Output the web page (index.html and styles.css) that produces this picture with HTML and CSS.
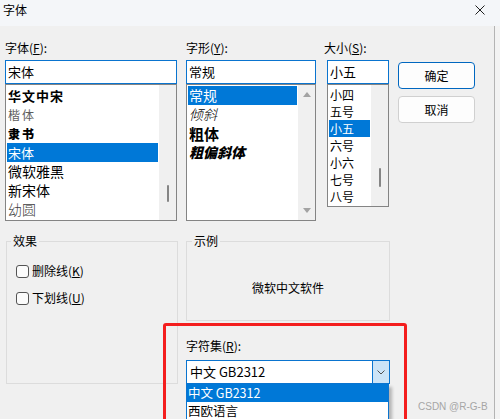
FILE: index.html
```html
<!DOCTYPE html>
<html lang="zh-CN">
<head>
    <meta charset="UTF-8">
    <title>字体</title>
    <link rel="stylesheet" href="styles.css">
</head>
<body>
    <div class="dialog">
        <header class="titlebar">
            <span>字体</span>
            <svg class="close" viewBox="0 0 10 10"><path d="M0.5 0.5L9.5 9.5M9.5 0.5L0.5 9.5"/></svg>
        </header>

        <div class="body">
            <div class="pickers">
                <div class="col col-font">
                    <label class="caption">字体(<u>F</u>):</label>
                    <div class="field">宋体</div>
                    <div class="listbox">
                        <ul class="items">
                            <li class="f-zhongsong">华文中宋</li>
                            <li class="f-kai">楷体</li>
                            <li class="f-li">隶书</li>
                            <li class="f-song sel">宋体</li>
                            <li class="f-yahei">微软雅黑</li>
                            <li class="f-yahei">新宋体</li>
                            <li class="f-yuan">幼圆</li>
                        </ul>
                        <div class="scrollbar"><span class="thumb"></span></div>
                    </div>
                </div>

                <div class="col col-style">
                    <label class="caption">字形(<u>Y</u>):</label>
                    <div class="field">常规</div>
                    <div class="listbox">
                        <ul class="items">
                            <li class="sel">常规</li>
                            <li class="s-italic">倾斜</li>
                            <li class="s-bold">粗体</li>
                            <li class="s-bolditalic">粗偏斜体</li>
                        </ul>
                        <div class="scrollbar arrows">
                            <span class="up"></span>
                            <span class="down"></span>
                        </div>
                    </div>
                </div>

                <div class="col col-size">
                    <label class="caption">大小(<u>S</u>):</label>
                    <div class="field">小五</div>
                    <div class="listbox">
                        <ul class="items">
                            <li>小四</li>
                            <li>五号</li>
                            <li class="sel">小五</li>
                            <li>六号</li>
                            <li>小六</li>
                            <li>七号</li>
                            <li>八号</li>
                        </ul>
                        <div class="scrollbar"><span class="thumb"></span></div>
                    </div>
                </div>

                <div class="actions">
                    <button class="btn primary">确定</button>
                    <button class="btn">取消</button>
                </div>
            </div>

            <div class="lower">
                <fieldset class="group effects">
                    <legend>效果</legend>
                    <label class="check"><span class="box"></span><span>删除线(<u>K</u>)</span></label>
                    <label class="check"><span class="box"></span><span>下划线(<u>U</u>)</span></label>
                </fieldset>

                <div class="right">
                    <fieldset class="group sample">
                        <legend>示例</legend>
                        <div class="preview">微软中文软件</div>
                    </fieldset>
                    <label class="caption charset">字符集(<u>R</u>):</label>
                    <div class="combo">
                        <span class="value">中文 GB2312</span>
                        <span class="drop"><svg viewBox="0 0 8 5"><path d="M0.5 0.5L4 4L7.5 0.5"/></svg></span>
                    </div>
                    <ul class="dropdown">
                        <li class="sel">中文 GB2312</li>
                        <li>西欧语言</li>
                    </ul>
                </div>
            </div>
        </div>

        <!-- red highlight box and blog watermark drawn over the dialog -->
        <div class="mark"></div>
        <div class="watermark">CSDN @R-G-B</div>
    </div>
</body>
</html>
```

FILE: styles.css
```css
body { margin: 0; width: 500px; height: 419px; overflow: hidden; background: #f3f3f3; font-family: "Noto Sans CJK SC", sans-serif; font-size: 12px; color: #000; }
u { text-underline-offset: 1px; }

.dialog { position: relative; width: 500px; height: 419px; overflow: hidden; }
.titlebar { height: 26px; box-sizing: border-box; display: flex; justify-content: space-between; align-items: flex-start; padding: 2px 15px 0 3px; line-height: 16px; background: #f4f6f9; }
.close { width: 10px; height: 10px; margin-top: 3px; }
.close path { stroke: #1f1f1f; stroke-width: 1; fill: none; }

.body { width: 495px; height: 393px; box-sizing: border-box; padding: 14px 0 0 5px; background: #f0f0f0; border-right: 1px solid #b4b4b4; }

/* top row: font / style / size pickers and the buttons */
.pickers { display: flex; align-items: flex-start; }
.col-font { width: 172px; margin-right: 9px; }
.col-style { width: 130px; margin-right: 11px; }
.col-size { width: 62px; margin-right: 9px; }
.col-size .caption { margin-left: -3px; }

.caption { display: block; line-height: 16px; margin-bottom: 4px; }
.field { height: 24px; box-sizing: border-box; border: 1px solid #0a74cf; background: #fff; padding: 0 2px; font-size: 13px; line-height: 22px; }

.listbox { display: flex; box-sizing: border-box; border: 1px solid #848484; background: #fff; overflow: hidden; }
.col-font .listbox, .col-style .listbox { height: 137px; }
.col-size .listbox { height: 123px; }
.items { list-style: none; margin: 0; padding: 1px; flex: 1; min-width: 0; }
.items li { height: 19px; line-height: 19px; padding-left: 1px; white-space: nowrap; overflow: hidden; font-size: 14px; }
.col-size .items li { height: 17px; line-height: 17px; font-size: 12px; }
.items li.sel { background: #0078d7; color: #fff; }

.f-zhongsong { font-weight: 700; font-size: 13px !important; letter-spacing: 1px; }
.f-kai { color: #5e5e5e; font-size: 12px !important; letter-spacing: 2px; }
.f-li { font-weight: 900; font-size: 12px !important; letter-spacing: 2px; }
.f-song { font-size: 13px !important; }
.f-yuan { color: #3c3c3c; font-weight: 300; }
.s-italic { font-style: italic; font-weight: 300; }
.s-bold { font-weight: 700; font-size: 15px !important; }
.s-bolditalic { font-weight: 900; font-style: italic; }

.scrollbar { width: 17px; background: #f0f0f0; display: flex; flex-direction: column; align-items: center; }
.thumb { width: 2px; border-radius: 1px; background: #858585; }
.col-font .thumb { margin-top: 100px; height: 17px; }
.col-size .thumb { margin-top: 83px; height: 19px; }
.arrows { justify-content: space-between; padding: 7px 0; box-sizing: border-box; }
.up, .down { width: 0; height: 0; border-left: 4px solid transparent; border-right: 4px solid transparent; }
.up { border-bottom: 5px solid #a3a3a3; }
.down { border-top: 5px solid #a3a3a3; }

.actions { width: 77px; display: flex; flex-direction: column; gap: 7px; margin-top: 22px; }
.btn { height: 27px; border: 1px solid #d0d0d0; border-radius: 4px; background: #fdfdfd; font-family: inherit; font-size: 12px; color: #000; padding: 0; }
.btn.primary { border-color: #0067c0; }

/* lower row: effects, sample and charset */
.lower { display: flex; gap: 8px; margin: 12px 0 0 1px; }
.group { margin: 0; border: 1px solid #dcdcdc; box-sizing: border-box; min-width: 0; }
.group legend { padding: 0 2px; margin-left: -5px; line-height: 16px; }

.effects { width: 172px; height: 151px; padding: 14px 9px 0 9px; }
.check { display: flex; align-items: center; gap: 3px; height: 16px; margin-bottom: 11px; line-height: 16px; }
.box { width: 13px; height: 13px; box-sizing: border-box; border: 1px solid #545454; border-radius: 3px; background: #fbfbfb; }

.right { width: 204px; display: flex; flex-direction: column; }
.sample { height: 88px; padding: 31px 10px 0 10px; }
.preview { text-align: center; line-height: 16px; }
.charset { margin: 17px 0 6px; }

.combo { display: flex; height: 24px; box-sizing: border-box; border: 1px solid #0a74cf; background: #fff; }
.combo .value { flex: 1; padding-left: 3px; font-size: 13px; line-height: 22px; }
.combo .drop { width: 16px; display: flex; align-items: center; justify-content: center; background: #cce4f7; border-left: 1px solid #0a74cf; }
.combo svg { width: 8px; height: 5px; }
.combo path { stroke: #505050; stroke-width: 1; fill: none; }

.dropdown { list-style: none; margin: 0; padding: 0; width: 203px; box-sizing: border-box; border: 1px solid #0a74cf; border-top: 0; background: #fff; box-shadow: 3px 3px 3px rgba(0,0,0,0.25); }
.dropdown li { height: 18px; line-height: 18px; padding-left: 1px; font-size: 12.5px; }
.dropdown li.sel { background: #0078d7; color: #fff; }

.mark { position: absolute; left: 163px; top: 323px; width: 244px; height: 120px; box-sizing: border-box; border: 3px solid #f41e1e; border-radius: 3px; }
.watermark { position: absolute; left: 418px; top: 401px; font-family: "Liberation Sans", sans-serif; font-size: 10px; line-height: 12px; color: #a6a6a6; }
```
